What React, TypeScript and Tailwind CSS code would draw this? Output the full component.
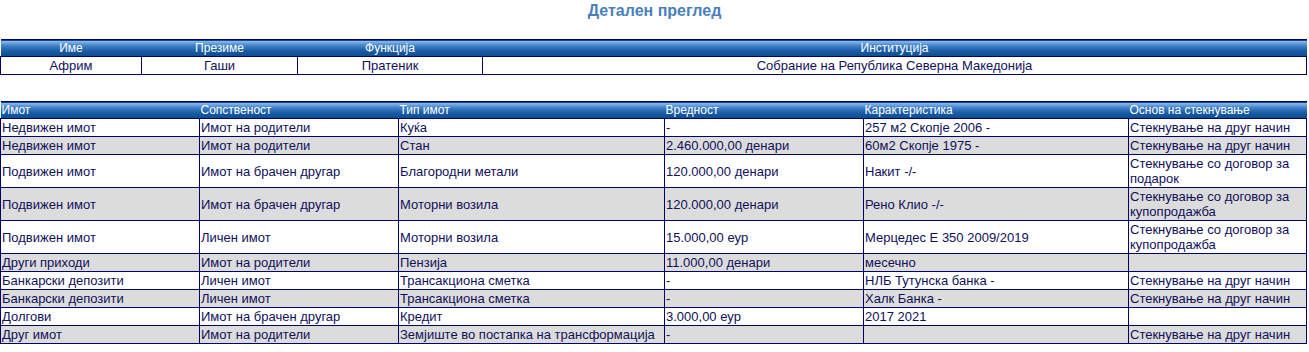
const person = { ime: 'Африм', prezime: 'Гаши', funkcija: 'Пратеник', institucija: 'Собрание на Република Северна Македонија' }

const rows: string[][] = [
  ['Недвижен имот', 'Имот на родители', 'Куќа', '-', '257 м2 Скопје 2006 -', 'Стекнување на друг начин'],
  ['Недвижен имот', 'Имот на родители', 'Стан', '2.460.000,00 денари', '60м2 Скопје 1975 -', 'Стекнување на друг начин'],
  ['Подвижен имот', 'Имот на брачен другар', 'Благородни метали', '120.000,00 денари', 'Накит -/-', 'Стекнување со договор за подарок'],
  ['Подвижен имот', 'Имот на брачен другар', 'Моторни возила', '120.000,00 денари', 'Рено Клио -/-', 'Стекнување со договор за купопродажба'],
  ['Подвижен имот', 'Личен имот', 'Моторни возила', '15.000,00 еур', 'Мерцедес Е 350 2009/2019', 'Стекнување со договор за купопродажба'],
  ['Други приходи', 'Имот на родители', 'Пензија', '11.000,00 денари', 'месечно', ''],
  ['Банкарски депозити', 'Личен имот', 'Трансакциона сметка', '-', 'НЛБ Тутунска банка -', 'Стекнување на друг начин'],
  ['Банкарски депозити', 'Личен имот', 'Трансакциона сметка', '-', 'Халк Банка -', 'Стекнување на друг начин'],
  ['Долгови', 'Имот на брачен другар', 'Кредит', '3.000,00 еур', '2017 2021', ''],
  ['Друг имот', 'Имот на родители', 'Земјиште во постапка на трансформација', '-', '', 'Стекнување на друг начин'],
]

const headers = ['Имот', 'Сопственост', 'Тип имот', 'Вредност', 'Карактеристика', 'Основ на стекнување']

const headBg = 'bg-[linear-gradient(to_bottom,#8fbcee_0%,#3f80c6_30%,#1a5ea6_60%,#0b4a8c_100%)]'

export default function App() {
  return (
    <div className="w-[1309px] bg-white font-['Liberation_Sans',Arial,sans-serif] text-[#10105a]">
      <h1 className="text-center text-[16px] leading-[22px] font-bold text-[#4a7fbc] mb-[17px]">
        Детален преглед
      </h1>

      <table className="w-[1307px] table-fixed border-collapse text-[13px]">
        <colgroup>
          <col className="w-[141px]" />
          <col className="w-[156px]" />
          <col className="w-[185px]" />
          <col />
        </colgroup>
        <thead>
          <tr className={`${headBg} border-t border-[#000066] text-white text-[12px] leading-[14px]`}>
            <th className="font-normal py-[1px]">Име</th>
            <th className="font-normal py-[1px]">Презиме</th>
            <th className="font-normal py-[1px]">Функција</th>
            <th className="font-normal py-[1px]">Институција</th>
          </tr>
        </thead>
        <tbody>
          <tr className="leading-[15px] text-center">
            <td className="border border-[#000066] py-[1px]">{person.ime}</td>
            <td className="border border-[#000066] py-[1px]">{person.prezime}</td>
            <td className="border border-[#000066] py-[1px]">{person.funkcija}</td>
            <td className="border border-[#000066] py-[1px]">{person.institucija}</td>
          </tr>
        </tbody>
      </table>

      <table className="w-[1307px] mt-[26px] table-fixed border-collapse text-[13px]">
        <colgroup>
          <col className="w-[199px]" />
          <col className="w-[199px]" />
          <col className="w-[266px]" />
          <col className="w-[199px]" />
          <col className="w-[265px]" />
          <col />
        </colgroup>
        <thead>
          <tr className={`${headBg} border-t border-[#000066] text-white text-[12px] leading-[14px]`}>
            {headers.map((h) => (
              <th key={h} className="font-normal text-left pl-[1px] py-[1px]">{h}</th>
            ))}
          </tr>
        </thead>
        <tbody>
          {rows.map((r, i) => (
            <tr key={i} className={`leading-[15px] ${i % 2 === 1 ? 'bg-[#dcdcdc]' : 'bg-white'}`}>
              {r.map((c, j) => (
                <td key={j} className="border border-[#000066] pl-[1px] pr-[2px] py-[1px] align-middle">
                  {c}
                </td>
              ))}
            </tr>
          ))}
        </tbody>
      </table>
    </div>
  )
}
